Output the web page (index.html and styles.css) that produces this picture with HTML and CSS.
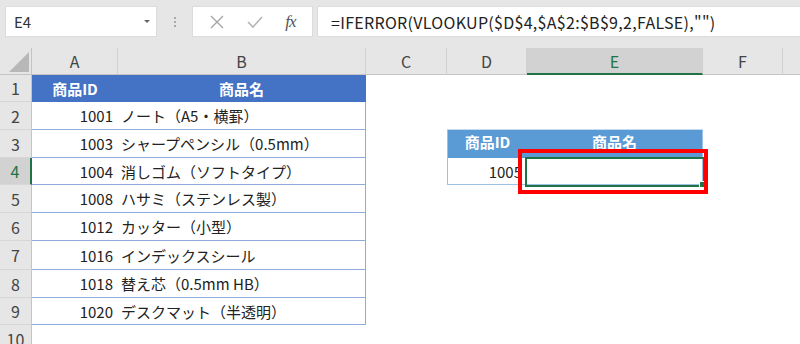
FILE: index.html
```html
<!doctype html>
<html lang="ja">
<head>
  <meta charset="utf-8">
  <title>VLOOKUP</title>
  <link rel="stylesheet" href="styles.css">
</head>
<body>
  <div class="toolbar">
    <div class="name-box">
      <span>E4</span>
      <span class="drop"></span>
    </div>
    <div class="grip"><i></i><i></i><i></i></div>
    <div class="fx-buttons">
      <svg width="16" height="16" viewBox="0 0 16 16"><path d="M2 2L14 14M14 2L2 14" stroke="#a6a6a6" stroke-width="1.4" fill="none"/></svg>
      <svg width="18" height="16" viewBox="0 0 18 16"><path d="M2 8L7 13L16 3" stroke="#b3b3b3" stroke-width="1.6" fill="none"/></svg>
      <span class="fx">fx</span>
    </div>
    <div class="formula">=IFERROR(VLOOKUP($D$4,$A$2:$B$9,2,FALSE),"")</div>
  </div>

  <div class="sheet">
    <!-- column headers -->
    <div class="corner"><span class="tri"></span></div>
    <div class="col-head">A</div>
    <div class="col-head">B</div>
    <div class="col-head">C</div>
    <div class="col-head">D</div>
    <div class="col-head active">E</div>
    <div class="col-head">F</div>
    <div class="col-head last"></div>

    <!-- row 1 -->
    <div class="row-head">1</div>
    <div class="cell th">商品ID</div>
    <div class="cell th edge">商品名</div>
    <div class="cell"></div><div class="cell"></div><div class="cell"></div><div class="cell"></div><div class="cell"></div>

    <!-- row 2 -->
    <div class="row-head">2</div>
    <div class="cell num tb">1001</div>
    <div class="cell txt tb edge">ノート（A5・横罫）</div>
    <div class="cell"></div><div class="cell sb"></div><div class="cell sb"></div><div class="cell"></div><div class="cell"></div>

    <!-- row 3 -->
    <div class="row-head">3</div>
    <div class="cell num tb">1003</div>
    <div class="cell txt tb edge">シャープペンシル（0.5mm）</div>
    <div class="cell"></div>
    <div class="cell sh left">商品ID</div>
    <div class="cell sh right">商品名</div>
    <div class="cell"></div><div class="cell"></div>

    <!-- row 4 -->
    <div class="row-head active">4</div>
    <div class="cell num tb">1004</div>
    <div class="cell txt tb edge">消しゴム（ソフトタイプ）</div>
    <div class="cell"></div>
    <div class="cell num sd left">1005</div>
    <div class="cell sd right selected">
      <span class="sel"><span class="handle"></span></span>
      <span class="mark"></span>
    </div>
    <div class="cell"></div><div class="cell"></div>

    <!-- row 5 -->
    <div class="row-head">5</div>
    <div class="cell num tb">1008</div>
    <div class="cell txt tb edge">ハサミ（ステンレス製）</div>
    <div class="cell"></div><div class="cell"></div><div class="cell"></div><div class="cell"></div><div class="cell"></div>

    <!-- row 6 -->
    <div class="row-head">6</div>
    <div class="cell num tb">1012</div>
    <div class="cell txt tb edge">カッター（小型）</div>
    <div class="cell"></div><div class="cell"></div><div class="cell"></div><div class="cell"></div><div class="cell"></div>

    <!-- row 7 -->
    <div class="row-head">7</div>
    <div class="cell num tb">1016</div>
    <div class="cell txt tb edge">インデックスシール</div>
    <div class="cell"></div><div class="cell"></div><div class="cell"></div><div class="cell"></div><div class="cell"></div>

    <!-- row 8 -->
    <div class="row-head">8</div>
    <div class="cell num tb">1018</div>
    <div class="cell txt tb edge">替え芯（0.5mm HB）</div>
    <div class="cell"></div><div class="cell"></div><div class="cell"></div><div class="cell"></div><div class="cell"></div>

    <!-- row 9 -->
    <div class="row-head">9</div>
    <div class="cell num tb">1020</div>
    <div class="cell txt tb edge">デスクマット（半透明）</div>
    <div class="cell"></div><div class="cell"></div><div class="cell"></div><div class="cell"></div><div class="cell"></div>

    <!-- row 10 -->
    <div class="row-head">10</div>
    <div class="cell"></div><div class="cell"></div><div class="cell"></div><div class="cell"></div><div class="cell"></div><div class="cell"></div><div class="cell"></div>
  </div>
</body>
</html>
```
FILE: styles.css
```css
body {
  margin: 0;
  width: 800px;
  height: 344px;
  overflow: hidden;
  background: #fff;
  font-family: 'Noto Sans CJK JP', 'Noto Sans', sans-serif;
  color: #222;
}
.toolbar {
  height: 48px;
  background: #e6e6e6;
  display: flex;
  align-items: flex-start;
  padding-top: 6px;
  box-sizing: border-box;
}
.name-box {
  margin-left: 5px;
  width: 152px;
  height: 31px;
  background: #fff;
  border: 1px solid #dcdcdc;
  box-sizing: border-box;
  display: flex;
  align-items: center;
  justify-content: space-between;
  padding: 0 6px 0 8px;
  font-size: 15px;
  color: #333;
}
.drop {
  width: 0;
  height: 0;
  border-left: 3px solid transparent;
  border-right: 3px solid transparent;
  border-top: 3px solid #666;
}
.grip {
  width: 35px;
  height: 31px;
  display: flex;
  flex-direction: column;
  align-items: center;
  justify-content: center;
  gap: 2px;
}
.grip i {
  width: 2px;
  height: 2px;
  background: #aaa;
}
.fx-buttons {
  width: 121px;
  height: 31px;
  background: #fff;
  border: 1px solid #dcdcdc;
  box-sizing: border-box;
  display: flex;
  align-items: center;
  justify-content: space-around;
  padding: 0 6px;
}
.fx {
  font-family: 'Liberation Serif', serif;
  font-style: italic;
  font-size: 17px;
  color: #555;
  letter-spacing: -1px;
}
.formula {
  margin-left: 4px;
  flex: 1;
  height: 31px;
  background: #fff;
  border: 1px solid #dcdcdc;
  border-right: none;
  box-sizing: border-box;
  padding-left: 13px;
  display: flex;
  align-items: center;
  font-size: 16px;
  letter-spacing: 0.3px;
  color: #222;
  white-space: nowrap;
}
.sheet {
  display: grid;
  grid-template-columns: 32px 86px 248px 81px 80px 176px 80px 1fr;
  grid-template-rows: 27px 27px 28px 28px 27px 28px 28px 29px 28px 27px 28px;
  font-size: 15px;
}
.corner {
  background: #e6e6e6;
  border-bottom: 1px solid #c4c4c4;
  border-right: 1px solid #c4c4c4;
  box-sizing: border-box;
  position: relative;
}
.tri {
  position: absolute;
  right: 2px;
  bottom: 2px;
  width: 0;
  height: 0;
  border-left: 20px solid transparent;
  border-bottom: 20px solid #b8b8b8;
}
.col-head {
  background: #e6e6e6;
  border-bottom: 1px solid #c4c4c4;
  border-right: 1px solid #d0d0d0;
  box-sizing: border-box;
  display: flex;
  align-items: center;
  justify-content: center;
  color: #444;
  font-size: 16px;
}
.col-head.active {
  background: #d2d2d2;
  color: #217346;
  border-bottom: 2px solid #217346;
}
.col-head.last {
  border-right: none;
}
.row-head {
  background: #e6e6e6;
  border-right: 1px solid #c4c4c4;
  border-bottom: 1px solid #d6d6d6;
  box-sizing: border-box;
  display: flex;
  align-items: center;
  justify-content: center;
  color: #444;
  font-size: 16px;
}
.row-head.active {
  background: #d2d2d2;
  color: #217346;
  border-right: 2px solid #217346;
}
.cell {
  box-sizing: border-box;
  display: flex;
  align-items: center;
  min-width: 0;
  white-space: nowrap;
}
.num {
  justify-content: flex-end;
  padding-right: 5px;
}
.txt {
  padding-left: 3px;
}
.th {
  background: #4472c4;
  color: #fff;
  font-weight: bold;
  justify-content: center;
}
.tb {
  border-bottom: 1px solid #8eabdc;
}
.edge {
  border-right: 1px solid #8eabdc;
}
.th.edge {
  border-right-color: #4472c4;
}
.sb {
  border-bottom: 1px solid #c5daf0;
}
.sh {
  background: #5b9bd5;
  color: #fff;
  font-weight: bold;
  justify-content: center;
  padding-bottom: 5px;
}
.sd {
  border-bottom: 1px solid #9bc2e6;
}
.left {
  border-left: 1px solid #9bc2e6;
}
.right {
  border-right: 1px solid #9bc2e6;
}
.selected {
  position: relative;
}
.sel {
  position: absolute;
  left: -2px;
  top: -1px;
  width: 180px;
  height: 30px;
  border: 2px solid #217346;
  box-sizing: border-box;
}
.handle {
  position: absolute;
  right: -3px;
  bottom: -3px;
  width: 5px;
  height: 5px;
  background: #217346;
  border: 1px solid #fff;
}
.mark {
  position: absolute;
  left: -9px;
  top: -9px;
  width: 190px;
  height: 45px;
  border: 4px solid #ff0000;
  box-sizing: border-box;
}
```
